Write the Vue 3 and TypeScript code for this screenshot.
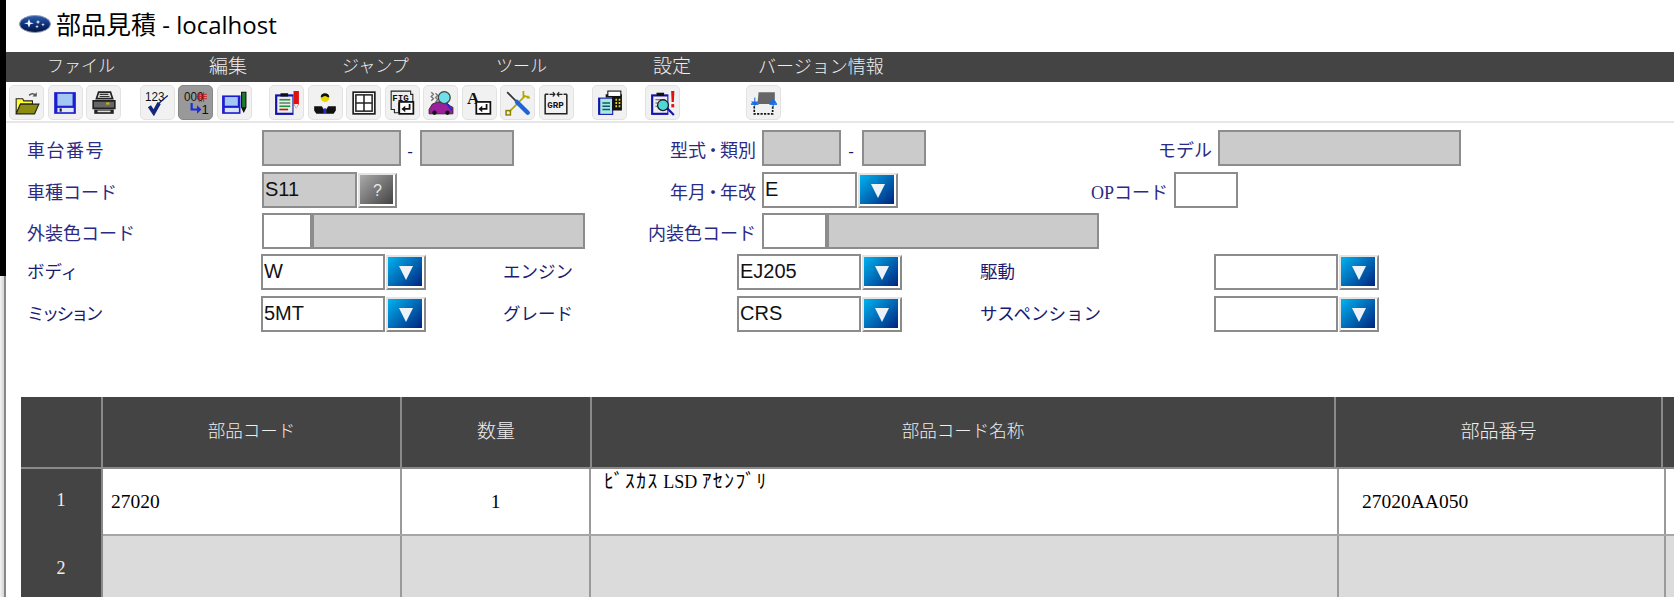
<script setup lang="ts">
const menus = [
  { label: 'ファイル', cls: 'm1' },
  { label: '編集', cls: 'm2' },
  { label: 'ジャンプ', cls: 'm3' },
  { label: 'ツール', cls: 'm4' },
  { label: '設定', cls: 'm5' },
  { label: 'バージョン情報', cls: 'm6' },
]
const headCols = [
  { label: '', cls: 'h0' },
  { label: '部品コード', cls: 'h1' },
  { label: '数量', cls: 'h2' },
  { label: '部品コード名称', cls: 'h3' },
  { label: '部品番号', cls: 'h4' },
  { label: '', cls: 'h5' },
]
</script>

<template>
  <div class="page">
    <div class="edge"></div>
    <div class="title">
      <svg class="logo" viewBox="0 0 32 18">
        <defs>
          <linearGradient id="oval" x1="0" y1="0" x2="0" y2="1">
            <stop offset="0" stop-color="#2f5fb0" />
            <stop offset="0.6" stop-color="#0a2a70" />
            <stop offset="1" stop-color="#06163f" />
          </linearGradient>
        </defs>
        <ellipse cx="16" cy="9" rx="15.5" ry="8.5" fill="url(#oval)" stroke="#8f9bb8" stroke-width="1" />
        <path d="M10 4l1.300 3.500 3.700.8-3.700 1-1.300 3.500-1.300-3.500-3.700-1 3.700-.8zM19 5l.7 1.600 1.700.5-1.700.5-.7 1.600-.7-1.600-1.700-.5 1.700-.5zM24 8l.6 1.300 1.400.4-1.400.4-.6 1.300-.6-1.300-1.400-.4 1.400-.4zM18 10l.6 1.300 1.400.4-1.400.4-.6 1.300-.6-1.300-1.400-.4 1.400-.4z" fill="#eef2fa" />
      </svg>
      <span class="title-text"><span class="title-jp">部品見積</span> - localhost</span>
    </div>
    <div class="menubar">
      <span v-for="m in menus" :key="m.label" class="menu" :class="m.cls">{{ m.label }}</span>
    </div>

    <div class="toolbar">
      <button class="tb t1">
        <svg viewBox="0 0 24 24"><path d="M14 5c2-2 4-2 6 0" fill="none" stroke="#555" stroke-width="1.500" /><path d="M21 2v4h-4z" fill="#555" /><path d="M2 8h6l1 2h8v3H6l-4 9z" fill="#ffff33" stroke="#222" /><path d="M6 13h17l-4 9H2z" fill="#8c8c10" stroke="#222" /></svg>
      </button>
      <button class="tb t2">
        <svg viewBox="0 0 24 24"><rect x="2" y="2" width="20" height="20" fill="#1c1cd0" /><rect x="5" y="3.500" width="14" height="11" fill="#a4c8f4" /><rect x="5" y="16.500" width="15" height="4" fill="#dfe8f6" /><rect x="7" y="17" width="2" height="3" fill="#222" /></svg>
      </button>
      <button class="tb t3">
        <svg viewBox="0 0 24 24"><path d="M7 2h11l2 6H5z" fill="#ddd" stroke="#222" stroke-width="1.500" /><path d="M8 4h8M8 6h9" stroke="#333" /><path d="M2 10h20v7H2z" fill="#666" stroke="#222" stroke-width="1.500" /><rect x="14" y="11.500" width="3" height="2" fill="#c8b400" /><path d="M3 18h18v4H3z" fill="#222" /><path d="M6 19h12v1.500H6z" fill="#ddd" /></svg>
      </button>

      <button class="tb t4">
        <svg viewBox="0 0 24 24"><text x="1" y="10" class="ico-txt" textLength="18" lengthAdjust="spacingAndGlyphs">123</text><path d="M5 15l4 6 5-9" fill="none" stroke="#16267a" stroke-width="3.400" /><path d="M13 13l9-8" stroke="#16267a" stroke-width="1.200" /></svg>
      </button>
      <button class="tb t5 on">
        <svg viewBox="0 0 24 24"><text x="1" y="10" class="ico-txt" textLength="18" lengthAdjust="spacingAndGlyphs">000</text><path d="M13 4h9M13 6h9M13 8h9M15 2v9M17 2v9M19 2v9" stroke="#d01010" stroke-width="0.700" /><path d="M8 12v6h6" fill="none" stroke="#1c2ce0" stroke-width="2" /><path d="M13 14v8l4-4z" fill="#1c2ce0" /><text x="17" y="22" class="ico-txt">1</text></svg>
      </button>
      <button class="tb t6">
        <svg viewBox="0 0 24 24"><rect x="1" y="5" width="17" height="17" fill="#1c1cd0" /><rect x="3.500" y="6.500" width="12" height="8" fill="#a4c8f4" /><rect x="3.500" y="16.500" width="13" height="4" fill="#d8e4f5" /><path d="M19 2h4v14l-2 4-2-4z" fill="#1f7a2a" stroke="#111" /><path d="M19.500 16h3l-1.500 4z" fill="#111" /></svg>
      </button>

      <button class="tb t7">
        <svg viewBox="0 0 24 24"><rect x="1" y="4" width="17" height="19" fill="#1313b0" /><rect x="3" y="6" width="14" height="15" fill="#e8f0e8" /><rect x="6" y="3" width="7" height="3" fill="#111" /><path d="M5 9h10" stroke="#1a9a3a" stroke-width="1.500" /><path d="M5 12h10" stroke="#444" /><path d="M5 15h10" stroke="#1a9a3a" stroke-width="1.500" /><path d="M5 18h8" stroke="#d01010" stroke-width="1.500" /><path d="M18 1h5v12l-2.500 4-2.500-4z" fill="#e01010" /><path d="M18.500 13h4l-2 4z" fill="#eee" /></svg>
      </button>
      <button class="tb t8">
        <svg viewBox="0 0 24 24"><circle cx="12" cy="7" r="4" fill="#e8d800" /><path d="M8 6c1-4 7-4 8 0l-1 1c-2-2-4-2-6 0z" fill="#111" /><path d="M2 15h7l2 3v4H4l-2-3zM22 15h-7l-2 3v4h7l2-3z" fill="#111" /><rect x="11" y="13" width="2" height="2" fill="#fff" /><rect x="11" y="17" width="2" height="5" fill="#1c2ce0" /></svg>
      </button>
      <button class="tb t9">
        <svg viewBox="0 0 24 24"><rect x="2" y="2" width="20" height="20" fill="#fff" stroke="#222" stroke-width="1.600" /><rect x="4.500" y="4.500" width="15" height="15" fill="#fff" stroke="#222" stroke-width="1.400" /><path d="M12 4.500v15M4.500 12h15" stroke="#222" stroke-width="1.400" /></svg>
      </button>
      <button class="tb t10">
        <svg viewBox="0 0 24 24"><path d="M2 1h18v3h2v8H9v9H5v-3H2z" fill="#eee" stroke="#222" /><text x="3" y="10" class="ico-txt small">FIG</text><rect x="9.500" y="11" width="13" height="11" fill="#fff" stroke="#111" stroke-width="1.600" /><path d="M19 13v4.500h-6" fill="none" stroke="#111" stroke-width="1.600" /><path d="M15 14.500v6l-3.500-3z" fill="#111" /></svg>
      </button>
      <button class="tb t11">
        <svg viewBox="0 0 24 24"><path d="M3 2l2 2-2 2 2 2-2 2M7 3l2 2-2 2 2 2-2 2" fill="none" stroke="#777" stroke-width="1.300" /><path d="M1 22v-4l3-5 5-2h7l5 4 2 1v6z" fill="#9c1f9c" stroke="#222" stroke-width="0.800" /><circle cx="6" cy="21" r="2" fill="#111" /><circle cx="18" cy="21" r="2" fill="#111" /><path d="M17 12l5 7" stroke="#1c2ce0" stroke-width="1.500" /><circle cx="15" cy="7" r="5.500" fill="#6fe0e8" stroke="#444" stroke-width="1.200" /></svg>
      </button>
      <button class="tb t12">
        <svg viewBox="0 0 24 24"><text x="1" y="13" class="ico-serif">A</text><rect x="9.500" y="11" width="13" height="11" fill="#fff" stroke="#111" stroke-width="1.600" /><path d="M19 13v4.500h-6" fill="none" stroke="#111" stroke-width="1.600" /><path d="M15 14.500v6l-3.500-3z" fill="#111" /></svg>
      </button>
      <button class="tb t13">
        <svg viewBox="0 0 24 24"><path d="M19 5L4 20" stroke="#b0a800" stroke-width="1.600" /><path d="M17 1v5h5M23 7h-3" fill="none" stroke="#b0a800" stroke-width="1.600" /><rect x="1" y="19" width="4" height="4" fill="none" stroke="#8a8400" stroke-width="1.400" /><path d="M2 2l8 8" stroke="#333" stroke-width="1.600" /><path d="M11 11l10 10" stroke="#1e63d8" stroke-width="4" stroke-linecap="round" /></svg>
      </button>
      <button class="tb t14">
        <svg viewBox="0 0 24 24"><path d="M2 4h3M19 4h3M2 4v18h20V4" fill="none" stroke="#222" stroke-width="1.400" /><path d="M6 4h5M9 2l2 2-2 2M18 4h-5M15 2l-2 2 2 2" fill="none" stroke="#222" /><text x="4" y="17" class="ico-txt small">GRP</text></svg>
      </button>

      <button class="tb t15">
        <svg viewBox="0 0 24 24"><rect x="1" y="7" width="14" height="16" fill="#1313b0" /><rect x="3" y="8" width="11" height="14" fill="#a8e8e0" /><path d="M5 12h7M5 15h7M5 18h7" stroke="#0d5a6a" stroke-width="1.300" /><path d="M8 4h15v15h-9V7H8z" fill="#111" /><rect x="10" y="1" width="12" height="5" fill="#fff" stroke="#111" /><path d="M17 9h1.500M20 9h1.500M17 12h1.500M20 12h1.500M17 15h1.500M20 15h1.500" stroke="#e8d800" stroke-width="2" /></svg>
      </button>
      <button class="tb t16">
        <svg viewBox="0 0 24 24"><rect x="1" y="4" width="16" height="19" fill="#1313b0" /><rect x="3" y="6" width="13" height="15" fill="#eee" /><rect x="6" y="2.500" width="7" height="3" fill="#111" /><path d="M5 9h9M5 12h4M5 15h4" stroke="#555" /><path d="M15 16l7 7" stroke="#1313b0" stroke-width="2" /><circle cx="12" cy="14" r="5" fill="#4fd8d8" stroke="#222" stroke-width="1.200" /><path d="M19.500 1h3l-.5 10h-2z" fill="#e01010" /><rect x="19.700" y="13" width="2.600" height="3" fill="#e01010" /></svg>
      </button>
      <button class="tb t17">
        <svg viewBox="0 0 24 24"><path d="M7 2h15v6l-2 5H6z" fill="#666" /><path d="M3 15v7h17v-7" fill="none" stroke="#111" stroke-width="1.500" stroke-dasharray="2 1.200" /><path d="M0 13h7" stroke="#1c6ce0" stroke-width="1.500" /><path d="M3.500 7v4M1 11h5l-2.500 3zM20.500 12v5M18 12h5l-2.500-4z" fill="#1c6ce0" stroke="#1c6ce0" /><path d="M17 13h7" stroke="#1c6ce0" stroke-width="1.500" /></svg>
      </button>
    </div>

    <div class="form">
      <div class="row r1">
        <span class="lbl l-main sp-wide">車台番号</span>
        <div class="box gray w139"></div>
        <span class="dash d19">-</span>
        <div class="box gray w94"></div>
        <span class="lbl right w248">型式<span class="dot">・</span>類別</span>
        <div class="box gray w79"></div>
        <span class="dash d21">-</span>
        <div class="box gray w64"></div>
        <span class="lbl right w292">モデル</span>
        <div class="box gray w243"></div>
      </div>
      <div class="row r2">
        <span class="lbl l-main">車種コード</span>
        <div class="box gray w95">S11</div>
        <button class="ask">?</button>
        <span class="lbl right w365">年月<span class="dot">・</span>年改</span>
        <div class="box w95">E</div>
        <button class="drop"><i></i></button>
        <span class="lbl right w276"><span class="serif">OP</span>コード</span>
        <div class="box w64"></div>
      </div>
      <div class="row r3">
        <span class="lbl l-main">外装色コード</span>
        <div class="box w50"></div>
        <div class="box gray w273"></div>
        <span class="lbl right w177">内装色コード</span>
        <div class="box w65"></div>
        <div class="box gray w272"></div>
      </div>
      <div class="row r4">
        <span class="lbl thin l-sel">ボディ</span>
        <div class="box w124">W</div>
        <button class="drop"><i></i></button>
        <span class="lbl thin l-a">エンジン</span>
        <div class="box w124">EJ205</div>
        <button class="drop"><i></i></button>
        <span class="lbl thin l-b">駆動</span>
        <div class="box w124"></div>
        <button class="drop"><i></i></button>
      </div>
      <div class="row r5">
        <span class="lbl thin l-sel tight">ミッション</span>
        <div class="box w124">5MT</div>
        <button class="drop"><i></i></button>
        <span class="lbl thin l-a">グレード</span>
        <div class="box w124">CRS</div>
        <button class="drop"><i></i></button>
        <span class="lbl thin l-b">サスペンション</span>
        <div class="box w124"></div>
        <button class="drop"><i></i></button>
      </div>
    </div>

    <div class="table">
      <div class="thead">
        <div v-for="c in headCols" :key="c.cls" class="th" :class="c.cls">{{ c.label }}</div>
      </div>
      <div class="tr">
        <div class="rowno c0">1</div>
        <div class="td c1 ta-l">27020</div>
        <div class="td c2 ta-c">1</div>
        <div class="td c3 name"><span class="kana">ﾋﾞｽｶｽ</span> LSD <span class="kana">ｱｾﾝﾌﾞﾘ</span></div>
        <div class="td c4 num">27020AA050</div>
        <div class="td c5"></div>
      </div>
      <div class="tr grey">
        <div class="rowno c0">2</div>
        <div class="td c1"></div>
        <div class="td c2"></div>
        <div class="td c3"></div>
        <div class="td c4"></div>
        <div class="td c5"></div>
      </div>
    </div>
  </div>
</template>

<style>
html, body {
  margin: 0;
  background: #fff;
  overflow: hidden;
}
</style>

<style scoped>
.page {
  position: relative;
  width: 1674px;
  height: 597px;
  overflow: hidden;
  background: #fff;
  font-family: "Liberation Serif", "Noto Sans CJK JP", serif;
}
.edge {
  position: absolute;
  left: 0;
  top: 0;
  width: 6px;
  height: 276px;
  background: #000;
}
.edge::after {
  content: "";
  position: absolute;
  left: 0;
  top: 276px;
  width: 6px;
  height: 321px;
  background: linear-gradient(90deg, #f2f2f2 0, #d4d4d4 66%, #888 66%, #888 100%);
}
.title {
  height: 52px;
  padding-left: 19px;
  display: flex;
  align-items: center;
  gap: 5px;
  box-sizing: border-box;
}
.logo {
  width: 32px;
  height: 18px;
  margin-top: -4px;
}
.title-text {
  font-family: "Open Sans", "Noto Sans CJK JP", sans-serif;
  font-size: 24px;
  color: #000;
  margin-top: -6px;
}
.title-jp {
  font-family: "Noto Sans CJK JP", sans-serif;
  font-size: 25px;
}
.menubar {
  height: 30px;
  margin-left: 6px;
  background: #444;
  position: relative;
}
.menu {
  position: absolute;
  top: 0;
  font-family: "Noto Sans CJK JP", sans-serif;
  font-size: 17px;
  font-weight: 300;
  color: #eee;
  line-height: 26px;
}
.m1 { left: 41px; }
.m2 { left: 203px; font-size: 19px; }
.m3 { left: 336px; }
.m4 { left: 490px; }
.m5 { left: 647px; font-size: 19px; }
.m6 { left: 752px; font-size: 18px; }
.toolbar {
  height: 41px;
  margin-left: 6px;
  box-sizing: border-box;
  border-bottom: 2px solid #e6e6e6;
  display: flex;
  padding: 3px 0 0 3px;
  gap: 3.5px;
}
.tb {
  width: 35px;
  height: 35px;
  padding: 0;
  background: #f1f1f1;
  border: 1px solid #e2e2e2;
  border-radius: 5px;
  display: flex;
  align-items: center;
  justify-content: center;
  box-sizing: border-box;
}
.tb svg {
  width: 26px;
  height: 26px;
  display: block;
}
.tb.on {
  background: #999;
  border-color: #888;
}
.t4 { margin-left: 15px; }
.t7 { margin-left: 14px; }
.t15 { margin-left: 15px; }
.t16 { margin-left: 14.5px; }
.t17 { margin-left: 62.5px; }
.ico-txt {
  font-family: "Liberation Sans", sans-serif;
  font-size: 12px;
  fill: #111;
}
.ico-txt.small {
  font-size: 8.5px;
  font-family: "Liberation Mono", monospace;
  font-weight: 700;
}
.ico-serif {
  font-family: "Liberation Serif", serif;
  font-size: 16px;
  font-weight: 700;
  fill: #111;
}
.form {
  padding: 7px 0 0 27px;
  height: 274px;
  box-sizing: border-box;
}
.row {
  display: flex;
  height: 36px;
}
.r1 { margin-bottom: 6px; }
.r2 { margin-bottom: 5px; }
.r3 { margin-bottom: 5px; }
.r4 { margin-bottom: 6px; }
.lbl {
  flex: none;
  box-sizing: border-box;
  font-size: 18px;
  line-height: 36px;
  padding-top: 3px;
  color: #2b2b85;
  white-space: nowrap;
}
.lbl.thin {
  font-size: 17.5px;
  padding-top: 0;
  color: #1a1a70;
}
.lbl.tight {
  letter-spacing: -2.8px;
}
.dot {
  display: inline-block;
  width: 14px;
  text-indent: -2px;
  overflow: visible;
}
.l-main { width: 235px; }
.sp-wide { letter-spacing: 1.5px; }
.l-sel { width: 234px; }
.l-a { width: 234px; margin-left: 77px; }
.l-b { width: 234px; margin-left: 78px; }
.right {
  text-align: right;
  padding-right: 6px;
}
.serif { font-family: "Liberation Serif", serif; }
.w248 { width: 248px; }
.w292 { width: 292px; }
.w365 { width: 365px; }
.w276 { width: 276px; }
.w177 { width: 177px; }
.dash {
  flex: none;
  font-size: 17px;
  line-height: 36px;
  padding-top: 4px;
  box-sizing: border-box;
  text-align: center;
  color: #1a1a70;
  font-family: "Liberation Sans", sans-serif;
}
.d19 { width: 18px; }
.d21 { width: 20px; margin-right: 1px; }
.box {
  flex: none;
  box-sizing: border-box;
  height: 36px;
  border: 2px solid #8c8c8c;
  background: #fff;
  font-family: "Liberation Sans", sans-serif;
  font-size: 20px;
  line-height: 30px;
  padding-left: 1px;
  color: #111;
}
.d19 + .box { margin-left: 1px; }
.box.gray { background: #cbcbcb; }
.w139 { width: 139px; }
.w94 { width: 94px; }
.w79 { width: 79px; }
.w64 { width: 64px; }
.w243 { width: 243px; }
.w95 { width: 95px; }
.w50 { width: 50px; }
.w65 { width: 65px; }
.w273 { width: 273px; }
.w272 { width: 272px; }
.w124 { width: 124px; }
.ask, .drop {
  flex: none;
  width: 40px;
  height: 35px;
  margin: 1px 0 0 1px;
  padding: 0;
  box-sizing: border-box;
  border: 2px solid;
  border-color: #e4e4e4 #8a8a8a #8a8a8a #e4e4e4;
  box-shadow: inset -2px -2px 0 #fff;
  background-clip: padding-box;
  display: flex;
  align-items: center;
  justify-content: center;
}
.ask {
  width: 39px;
  background-image: linear-gradient(135deg, #aaa, #3c3c3c);
  color: #e8e8e8;
  font-family: "Liberation Sans", sans-serif;
  font-size: 16px;
}
.drop {
  background-image: linear-gradient(135deg, #00b4f0, #001a78);
}
.drop i {
  display: block;
  width: 0;
  height: 0;
  border-left: 7px solid transparent;
  border-right: 7px solid transparent;
  border-top: 14px solid #eef3f9;
}
.table {
  margin-left: 21px;
  font-size: 19.5px;
}
.thead {
  display: flex;
  height: 72px;
  box-sizing: border-box;
  background: #444;
  border-bottom: 2px solid #8a8a8a;
}
.th {
  flex: none;
  box-sizing: border-box;
  border-right: 2px solid #8a8a8a;
  color: #eee;
  font-family: "Noto Sans CJK JP", sans-serif;
  font-weight: 300;
  font-size: 17.5px;
  line-height: 66px;
  text-align: center;
}
.h0 { width: 82px; }
.h1 { width: 299px; }
.h2 { width: 190px; font-size: 19px; }
.h3 { width: 744px; }
.h4 { width: 327px; font-size: 19px; }
.h5 { width: 12px; border-right: 0; }
.tr {
  display: flex;
  height: 67px;
  box-sizing: border-box;
  border-bottom: 2px solid #a6a6a6;
  background: #fff;
}
.tr.grey { background: #dbdbdb; height: 64px; }
.rowno {
  flex: none;
  box-sizing: border-box;
  background: #444;
  color: #eee;
  text-align: center;
  line-height: 62px;
  border-right: 2px solid #8a8a8a;
  margin-bottom: -2px;
  font-size: 18px;
}
.grey .rowno { line-height: 65px; }
.td {
  flex: none;
  box-sizing: border-box;
  border-right: 2px solid #9a9a9a;
  line-height: 66px;
  color: #000;
}
.c0 { width: 82px; }
.c1 { width: 299px; }
.c2 { width: 189px; }
.c3 { width: 748px; }
.c4 { width: 327px; }
.c5 { width: 8px; border-right: 0; }
.ta-l { padding-left: 8px; }
.ta-c { text-align: center; }
.name {
  font-size: 18px;
  line-height: 24px;
  padding: 1px 0 0 13px;
}
.kana { letter-spacing: 1.5px; font-size: 19.5px; }
.num { padding-left: 23px; }
</style>
